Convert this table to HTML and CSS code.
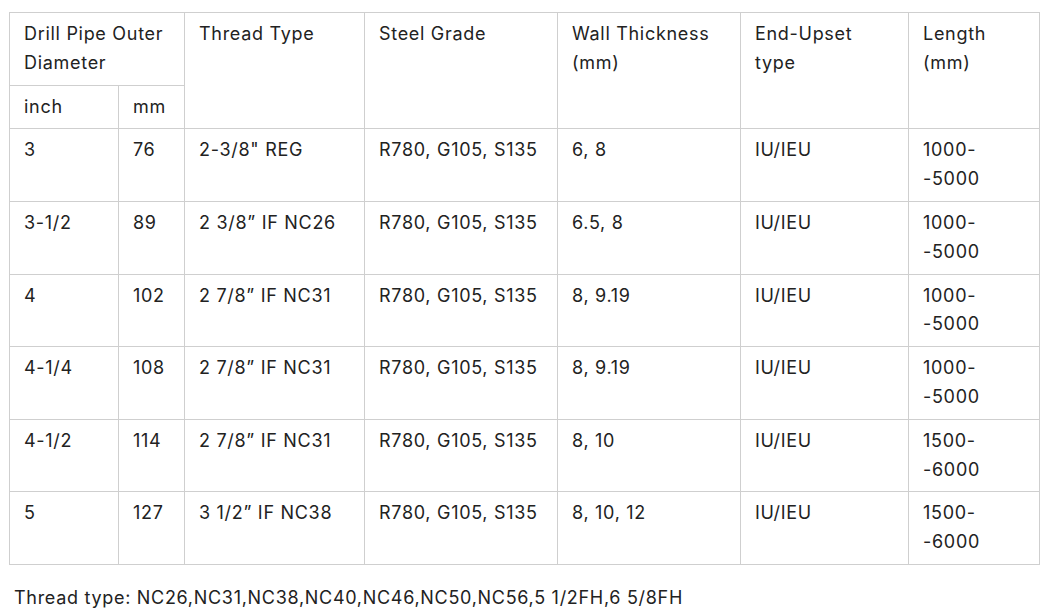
FILE: index.html
```
<!DOCTYPE html>
<html>
<head>
<meta charset="utf-8">
<link rel="stylesheet" href="styles.css">
</head>
<body>
<div class="page">
<table class="spec">
  <colgroup>
    <col class="c1"><col class="c2"><col class="c3"><col class="c4"><col class="c5"><col class="c6"><col class="c7">
  </colgroup>
  <tr class="h1">
    <td colspan="2">Drill Pipe Outer Diameter</td>
    <td rowspan="2">Thread Type</td>
    <td rowspan="2">Steel Grade</td>
    <td rowspan="2">Wall Thickness (mm)</td>
    <td rowspan="2">End-Upset type</td>
    <td rowspan="2">Length (mm)</td>
  </tr>
  <tr class="h2">
    <td>inch</td>
    <td>mm</td>
  </tr>
  <tr><td>3</td><td>76</td><td>2-3/8" REG</td><td>R780, G105, S135</td><td>6, 8</td><td>IU/IEU</td><td>1000-<br>-5000</td></tr>
  <tr><td>3-1/2</td><td>89</td><td>2 3/8” IF NC26</td><td>R780, G105, S135</td><td>6.5, 8</td><td>IU/IEU</td><td>1000-<br>-5000</td></tr>
  <tr><td>4</td><td>102</td><td>2 7/8” IF NC31</td><td>R780, G105, S135</td><td>8, 9.19</td><td>IU/IEU</td><td>1000-<br>-5000</td></tr>
  <tr><td>4-1/4</td><td>108</td><td>2 7/8” IF NC31</td><td>R780, G105, S135</td><td>8, 9.19</td><td>IU/IEU</td><td>1000-<br>-5000</td></tr>
  <tr><td>4-1/2</td><td>114</td><td>2 7/8” IF NC31</td><td>R780, G105, S135</td><td>8, 10</td><td>IU/IEU</td><td>1500-<br>-6000</td></tr>
  <tr><td>5</td><td>127</td><td>3 1/2” IF NC38</td><td>R780, G105, S135</td><td>8, 10, 12</td><td>IU/IEU</td><td>1500-<br>-6000</td></tr>
</table>
<p class="note">Thread type: NC26,NC31,NC38,NC40,NC46,NC50,NC56,5 1/2FH,6 5/8FH</p>
</div>
</body>
</html>
```
FILE: styles.css
```
html, body {
  margin: 0;
  padding: 0;
  background: #fff;
}
.page {
  padding: 12px 0 0 9px;
  font-family: Inter, "Noto Sans", sans-serif;
  color: #222;
  font-size: 18px;
  letter-spacing: 0.7px;
}
.spec {
  border-collapse: collapse;
  table-layout: fixed;
  width: 1031px;
  line-height: 28.8px;
}
.c1 { width: 109px; }
.c2 { width: 66px; }
.c3 { width: 180px; }
.c4 { width: 193px; }
.c5 { width: 183px; }
.c6 { width: 168px; }
.c7 { width: 131px; }
.spec td {
  border: 1px solid #cfcfcf;
  padding: 7px 15px 7px 14px;
  vertical-align: top;
  height: 57.6px;
  box-sizing: content-box;
}
.spec .h2 td {
  height: 28.8px;
}
.note {
  margin: 19px 0 0 5px;
  line-height: 28.8px;
}
```
